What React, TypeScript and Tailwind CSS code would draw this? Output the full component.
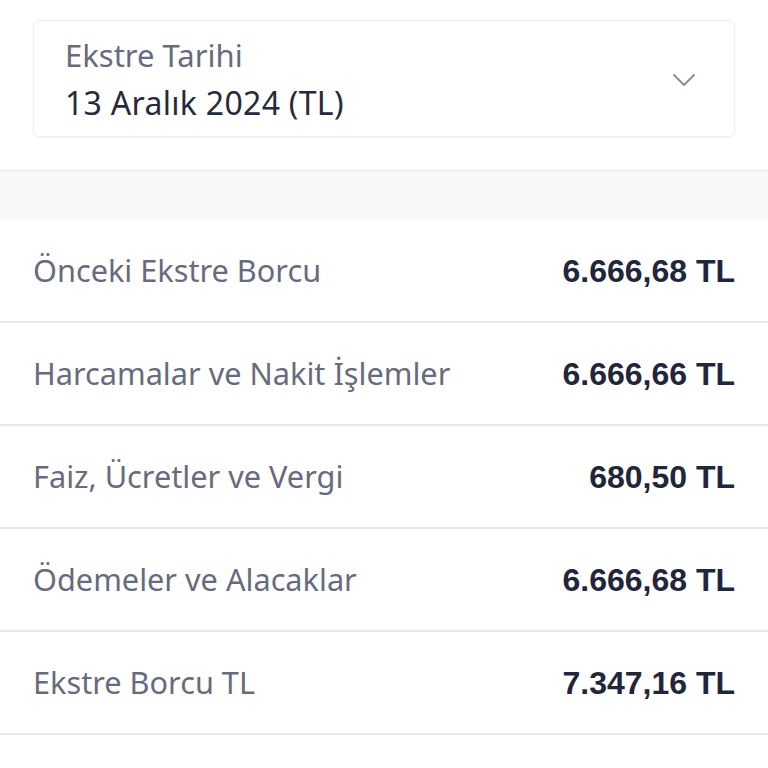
import React from 'react';

type Row = { label: string; amount: string };

const rows: Row[] = [
  { label: 'Önceki Ekstre Borcu', amount: '6.666,68 TL' },
  { label: 'Harcamalar ve Nakit İşlemler', amount: '6.666,66 TL' },
  { label: 'Faiz, Ücretler ve Vergi', amount: '680,50 TL' },
  { label: 'Ödemeler ve Alacaklar', amount: '6.666,68 TL' },
  { label: 'Ekstre Borcu TL', amount: '7.347,16 TL' },
];

const App: React.FC = () => {
  return (
    <div className="w-[768px] h-[768px] bg-white font-['Noto_Sans',sans-serif] overflow-hidden">
      <div className="px-[33px] pt-[20px] pb-[33px]">
        <div className="flex items-center justify-between rounded-md border border-[#eceef2] shadow-[0_1px_2px_rgba(0,0,0,0.04)] pl-[31px] pr-[38px] h-[117px]">
          <div className="flex flex-col">
            <span className="text-[31px] leading-[48px] text-[#676b7e]">Ekstre Tarihi</span>
            <span className="text-[32px] leading-[48px] text-[#262a3d] tracking-[0.3px]">13 Aralık 2024 (TL)</span>
          </div>
          <svg width="24" height="14" viewBox="0 0 24 14" fill="none" className="mt-[2px]">
            <path d="M2 2l10 10L22 2" stroke="#8a8ea0" strokeWidth="2" strokeLinecap="round" strokeLinejoin="round" />
          </svg>
        </div>
      </div>
      <div className="border-t border-[#e6e7ee] bg-[#f7f8fa] h-[50px]" />
      <div>
        {rows.map((row) => (
          <div
            key={row.label}
            className="flex items-center justify-between px-[33px] h-[103px] border-b-2 border-[#e7e8ec]"
          >
            <span className="text-[30.7px] text-[#676b7e]">{row.label}</span>
            <span className="text-[32px] font-bold text-[#22263a] font-['Liberation_Sans',sans-serif]">
              {row.amount}
            </span>
          </div>
        ))}
      </div>
    </div>
  );
};

export default App;
